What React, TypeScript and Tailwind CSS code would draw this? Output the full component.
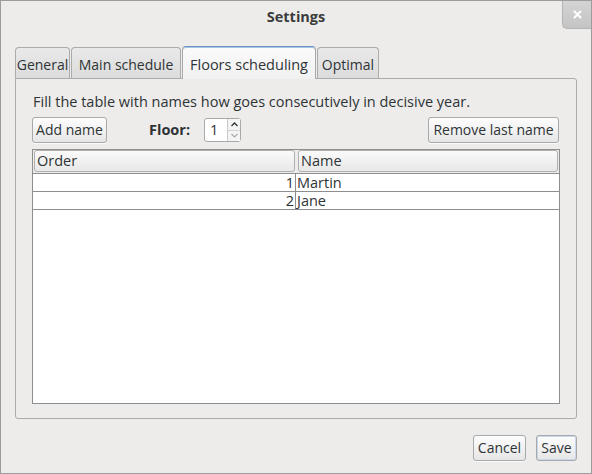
import React from 'react';

const rows = [
  { order: 1, name: 'Martin' },
  { order: 2, name: 'Jane' },
];

const font = { fontFamily: '"Open Sans", "Noto Sans", sans-serif' };

function Button({ children, className = '' }: { children: React.ReactNode; className?: string }) {
  return (
    <button
      className={`h-[26px] whitespace-nowrap rounded-[3px] border border-[#a9a9a9] bg-gradient-to-b from-[#fdfdfd] to-[#e6e6e6] px-[2px] text-[14px] leading-none text-[#2e3436] shadow-[0_1px_0_rgba(255,255,255,0.8)] ${className}`}
    >
      {children}
    </button>
  );
}

export default function App() {
  return (
    <div
      className="flex h-[474px] w-[592px] flex-col border border-[#9c9c9c] bg-[#edeceb] text-[14.5px] text-[#2e3436]"
      style={font}
    >
      {/* Title bar */}
      <div className="relative flex h-[31px] shrink-0 items-center justify-center">
        <span className="font-bold text-[#3c3c3c]">Settings</span>
        <div className="absolute right-0 top-0 flex h-[28px] w-[29px] items-center justify-center rounded-bl-[5px] border-b border-l border-[#b4b4b4] bg-gradient-to-b from-[#d4d4d4] to-[#c4c4c4]">
          <svg width="9" height="9" viewBox="0 0 9 9">
            <path d="M1.5 1.5 L7.5 7.5 M7.5 1.5 L1.5 7.5" stroke="#ffffff" strokeWidth="2" strokeLinecap="round" />
          </svg>
        </div>
      </div>

      <div className="flex flex-1 flex-col px-[14px] pt-[14px]">
        {/* Tabs */}
        <div className="flex h-[32px] items-end gap-[1px] text-[14px]">
          {['General', 'Main schedule', 'Floors scheduling', 'Optimal'].map((t) => {
            const active = t === 'Floors scheduling';
            const w =
              t === 'General' ? 'w-[55px]' : t === 'Main schedule' ? 'w-[110px]' : t === 'Optimal' ? 'w-[62px]' : 'w-[134px]';
            return active ? (
              <div
                key={t}
                className={`relative z-10 -mb-[1px] flex h-[33px] ${w} items-end justify-center whitespace-nowrap rounded-t-[4px] border border-b-0 border-[#a9a9a9] border-t-[#6c93c6] bg-gradient-to-b from-[#fbfbfb] to-[#f1f1f1] pb-[3px] text-[14.5px] shadow-[inset_0_1px_0_#a9c3e3]`}
              >
                {t}
              </div>
            ) : (
              <div
                key={t}
                className={`flex h-[31px] ${w} items-end justify-center whitespace-nowrap rounded-t-[4px] border border-b-0 border-[#ababab] bg-gradient-to-b from-[#e9e9e9] to-[#dcdcdc] pb-[3px]`}
              >
                {t}
              </div>
            );
          })}
        </div>

        {/* Panel */}
        <div className="flex h-[341px] flex-col rounded-b-[3px] rounded-tr-[3px] border border-[#ababab] bg-[#edeceb] px-[16px] pb-[14px] pt-[13px]">
          <p className="ml-[1px] whitespace-nowrap leading-[19px]">Fill the table with names how goes consecutively in decisive year.</p>

          <div className="mt-[6px] flex items-center">
            <Button className="w-[75px]">Add name</Button>
            <span className="ml-[42px] font-bold">Floor:</span>
            <div className="ml-[14px] flex h-[24px] w-[37px] rounded-[3px] border border-[#a9a9a9] bg-white">
              <span className="flex-1 pl-[5px] leading-[22px]">1</span>
              <div className="flex w-[13px] flex-col border-l border-[#c8c8c8] bg-[#f4f4f4]">
                <div className="flex flex-1 items-center justify-center border-b border-[#d4d4d4]">
                  <svg width="7" height="5" viewBox="0 0 7 5">
                    <path d="M0.5 4 L3.5 1 L6.5 4" stroke="#2e3436" strokeWidth="1.3" fill="none" />
                  </svg>
                </div>
                <div className="flex flex-1 items-center justify-center">
                  <svg width="7" height="5" viewBox="0 0 7 5">
                    <path d="M0.5 1 L3.5 4 L6.5 1" stroke="#a8a8a8" strokeWidth="1.1" fill="none" />
                  </svg>
                </div>
              </div>
            </div>
            <Button className="ml-auto mr-[1px] w-[131px]">Remove last name</Button>
          </div>

          {/* Table */}
          <div className="mt-[6px] flex flex-1 flex-col border border-[#8e8e8e] bg-white">
            <div className="flex gap-[3px] bg-[#edeceb] px-[1px] pb-[1px]">
              <div className="flex h-[22px] w-[261px] items-center rounded-[3px] border border-[#b0b0b0] bg-gradient-to-b from-[#fafafa] to-[#e8e8e8] pl-[2px]">
                Order
              </div>
              <div className="flex h-[22px] flex-1 items-center rounded-[3px] border border-[#b0b0b0] bg-gradient-to-b from-[#fafafa] to-[#e8e8e8] pl-[2px]">
                Name
              </div>
            </div>
            {rows.map((r) => (
              <div key={r.order} className="flex h-[18px] border-t border-[#8e8e8e] leading-[17px]">
                <div className="w-[263px] border-r border-[#8e8e8e] pr-[1px] text-right">{r.order}</div>
                <div className="flex-1 pl-[1px]">{r.name}</div>
              </div>
            ))}
            <div className="border-t border-[#8e8e8e]" />
          </div>
        </div>

        {/* Footer */}
        <div className="mt-[16px] flex justify-end gap-[10px]">
          <Button className="w-[53px]">Cancel</Button>
          <Button className="w-[41px] border-[#5d83b7] from-[#f3f7fc] to-[#dde7f3] shadow-[inset_0_0_0_1px_#c7d8ee]">Save</Button>
        </div>
      </div>
    </div>
  );
}
